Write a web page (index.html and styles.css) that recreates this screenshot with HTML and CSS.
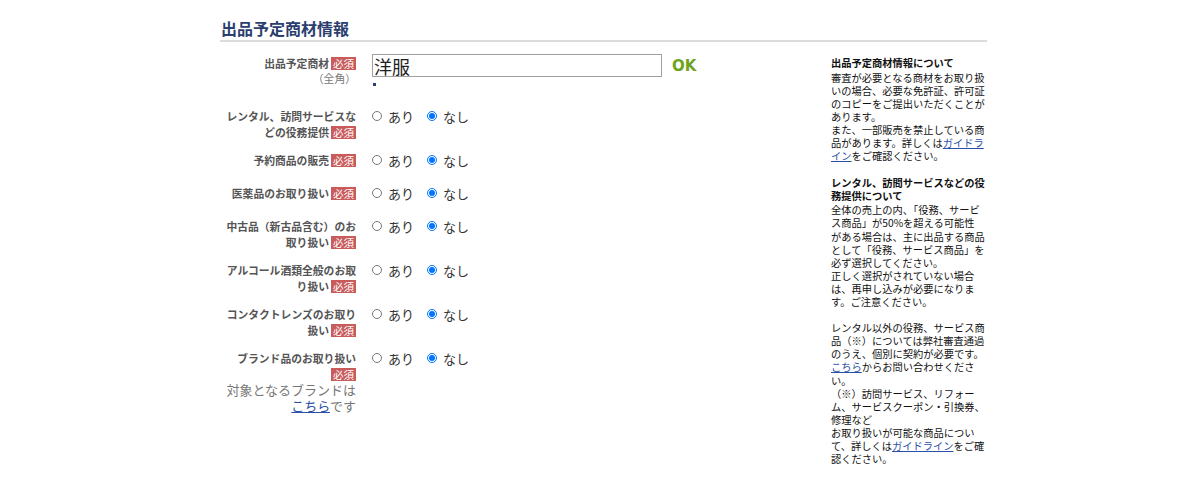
FILE: index.html
```html
<!DOCTYPE html>
<html lang="ja">
<head>
<meta charset="utf-8">
<title>出品予定商材情報</title>
<link rel="stylesheet" href="styles.css">
</head>
<body>
<div class="page">
  <h2 class="title">出品予定商材情報</h2>
  <div class="body">
    <div class="form">
      <div class="row row-first">
        <div class="label">出品予定商材<span class="req">必須</span><div class="sub">（全角）</div></div>
        <div class="field">
          <div class="inputline">
            <input class="text" type="text" value="洋服">
            <span class="ok">OK</span>
          </div>
          <div class="dot"></div>
        </div>
      </div>
      <div class="row">
        <div class="label">レンタル、訪問サービスなどの役務提供<span class="req">必須</span></div>
        <div class="radios">
          <label class="opt"><input type="radio" name="r1">あり</label>
          <label class="opt"><input type="radio" name="r1" checked>なし</label>
        </div>
      </div>
      <div class="row">
        <div class="label">予約商品の販売<span class="req">必須</span></div>
        <div class="radios">
          <label class="opt"><input type="radio" name="r2">あり</label>
          <label class="opt"><input type="radio" name="r2" checked>なし</label>
        </div>
      </div>
      <div class="row">
        <div class="label">医薬品のお取り扱い<span class="req">必須</span></div>
        <div class="radios">
          <label class="opt"><input type="radio" name="r3">あり</label>
          <label class="opt"><input type="radio" name="r3" checked>なし</label>
        </div>
      </div>
      <div class="row">
        <div class="label">中古品（新古品含む）のお取り扱い<span class="req">必須</span></div>
        <div class="radios">
          <label class="opt"><input type="radio" name="r4">あり</label>
          <label class="opt"><input type="radio" name="r4" checked>なし</label>
        </div>
      </div>
      <div class="row">
        <div class="label">アルコール酒類全般のお取り扱い<span class="req">必須</span></div>
        <div class="radios">
          <label class="opt"><input type="radio" name="r5">あり</label>
          <label class="opt"><input type="radio" name="r5" checked>なし</label>
        </div>
      </div>
      <div class="row">
        <div class="label">コンタクトレンズのお取り扱い<span class="req">必須</span></div>
        <div class="radios">
          <label class="opt"><input type="radio" name="r6">あり</label>
          <label class="opt"><input type="radio" name="r6" checked>なし</label>
        </div>
      </div>
      <div class="row">
        <div class="label">ブランド品のお取り扱い<span class="req">必須</span><div class="note">対象となるブランドは<a href="#">こちら</a>です</div></div>
        <div class="radios">
          <label class="opt"><input type="radio" name="r7">あり</label>
          <label class="opt"><input type="radio" name="r7" checked>なし</label>
        </div>
      </div>
    </div>
    <aside class="info">
      <p class="ih">出品予定商材情報について</p>
      <p>審査が必要となる商材をお取り扱いの場合、必要な免許証、許可証のコピーをご提出いただくことがあります。<br>また、一部販売を禁止している商品があります。詳しくは<a href="#">ガイドライン</a>をご確認ください。</p>
      <p class="ih gap">レンタル、訪問サービスなどの役務提供について</p>
      <p>全体の売上の内、「役務、サービス商品」が50%を超える可能性<br>がある場合は、主に出品する商品として「役務、サービス商品」を必ず選択してください。<br>正しく選択がされていない場合は、再申し込みが必要になります。ご注意ください。<br><br>レンタル以外の役務、サービス商品（※）については弊社審査通過のうえ、個別に契約が必要です。<a href="#">こちら</a>からお問い合わせください。<br>（※）訪問サービス、リフォーム、サービスクーポン・引換券、修理など<br>お取り扱いが可能な商品について、詳しくは<a href="#">ガイドライン</a>をご確認ください。</p>
    </aside>
  </div>
</div>
</body>
</html>
```

FILE: styles.css
```css
body {
  margin: 0;
  background: #fff;
  font-family: "Noto Sans CJK JP", "Noto Sans", sans-serif;
  color: #333;
}

.page {
  width: 767px;
  margin-left: 220px;
  padding-top: 18px;
}

.title {
  margin: 0;
  padding: 0 0 2px 1px;
  font-size: 16px;
  line-height: 20px;
  font-weight: bold;
  color: #2b3e6e;
  border-bottom: 2px solid #dcdcdc;
}

.body {
  display: flex;
  margin-top: 7px;
}

.form {
  flex: 1;
}

.row {
  display: flex;
  gap: 16px;
  padding: 6px 0;
  min-height: 21px;
}

.row-first {
  padding-bottom: 16px;
}

.label {
  width: 132px;
  margin-left: 4px;
  text-align: right;
  font-size: 10.8px;
  line-height: 16px;
  font-weight: bold;
  color: #555;
}

.req {
  display: inline-block;
  vertical-align: top;
  margin-top: 1.5px;
  margin-left: 2px;
  padding: 0 2px;
  background: #c95b5b;
  color: #fff;
  font-size: 10.5px;
  line-height: 13px;
  font-weight: normal;
}

.sub {
  font-weight: normal;
  color: #777;
  line-height: 14px;
}

.note {
  font-weight: normal;
  font-size: 13px;
  line-height: 15.5px;
  color: #777;
}

.note a {
  color: #2a4fa8;
}

.field {
  display: flex;
  flex-direction: column;
}

.inputline {
  display: flex;
  align-items: center;
  margin-top: -1px;
}

.text {
  width: 290px;
  height: 23px;
  box-sizing: border-box;
  margin: 0;
  padding: 0 1px;
  border: 1px solid #a0a0a0;
  border-radius: 0;
  font-family: "Noto Sans CJK JP", sans-serif;
  font-size: 18px;
  line-height: 21px;
  color: #222;
}

.ok {
  margin-left: 10px;
  font-family: "DejaVu Sans", Verdana, sans-serif;
  font-weight: bold;
  font-size: 15px;
  color: #6ea31e;
}

.dot {
  width: 3px;
  height: 3px;
  margin: 6px 0 0 1px;
  background: #2b3e6e;
}

.radios {
  display: flex;
  align-items: center;
  height: 16px;
  font-size: 13px;
  color: #333;
}

.opt {
  display: flex;
  align-items: center;
}

.opt + .opt {
  margin-left: 13px;
}

.opt input {
  width: 10px;
  height: 10px;
  margin: 0 6px 0 0;
}

.info {
  width: 156px;
  padding-top: 7px;
  font-size: 10.25px;
  line-height: 13.1px;
  color: #111;
}

.info p {
  margin: 0;
}

.info .ih {
  font-weight: bold;
  margin-bottom: 1.5px;
}

.info .gap {
  margin-top: 13.4px;
}

.info a {
  color: #2a4fa8;
}
```
